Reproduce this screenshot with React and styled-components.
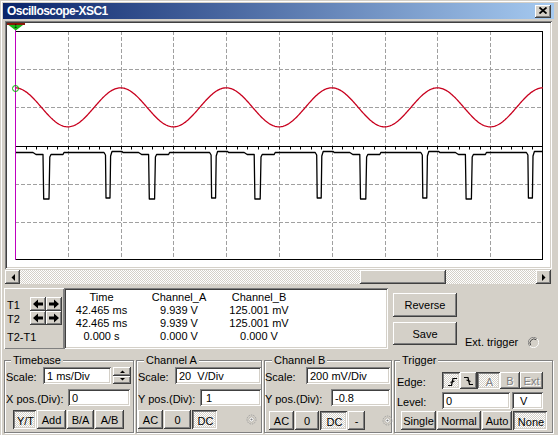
import React from "react";
import styled, { createGlobalStyle, css } from "styled-components";

const GlobalStyle = createGlobalStyle`
  html, body {
    margin: 0;
    padding: 0;
    background: #d4d0c8;
  }
  body {
    font-family: "Liberation Sans", Arial, sans-serif;
    font-size: 11px;
    color: #000;
  }
  * {
    box-sizing: border-box;
  }
`;

const raised = css`
  background-color: #d4d0c8;
  box-shadow: inset -1px -1px 0 #404040, inset 1px 1px 0 #fff,
    inset -2px -2px 0 #808080, inset 2px 2px 0 #d4d0c8;
`;

const sunken = css`
  box-shadow: inset 1px 1px 0 #808080, inset -1px -1px 0 #fff,
    inset 2px 2px 0 #404040, inset -2px -2px 0 #d4d0c8;
`;

const dither = css`
  background-color: #fff;
  background-image: repeating-conic-gradient(#d4d0c8 0 25%, #fff 0 50%);
  background-size: 2px 2px;
`;

const pressed = css`
  ${dither};
  box-shadow: inset 1px 1px 0 #404040, inset -1px -1px 0 #fff,
    inset 2px 2px 0 #808080, inset -2px -2px 0 #d4d0c8;
  padding: 2px 0 0 2px;
`;

const Window = styled.div`
  width: 558px;
  height: 435px;
  padding: 3px 4px 0 3px;
  background: #d4d0c8;
  display: flex;
  flex-direction: column;
  overflow: hidden;
  box-shadow: inset 1px 1px 0 #d4d0c8, inset 2px 2px 0 #fff;
`;

const TitleBar = styled.div`
  height: 16px;
  flex: none;
  display: flex;
  align-items: center;
  justify-content: space-between;
  padding: 0 3px 0 4px;
  background: linear-gradient(to right, #0a246a, #a6caf0);
  color: #fff;
  font-weight: bold;
  font-size: 12px;
  letter-spacing: -0.55px;
`;

const CloseBtn = styled.div`
  width: 16px;
  height: 13px;
  ${raised};
  display: flex;
  align-items: center;
  justify-content: center;
  padding-bottom: 1px;
`;

const Screen = styled.div`
  margin: 2px 2px 0 2px;
  height: 248px;
  flex: none;
  padding: 2px;
  background: #fff;
  ${sunken};

  svg {
    display: block;
  }
`;

const ScrollBar = styled.div`
  margin: 1px 3px 0 2px;
  height: 14px;
  flex: none;
  display: flex;
  ${dither};
`;

const ScrollBtn = styled.div`
  width: 15px;
  height: 14px;
  flex: none;
  ${raised};
  display: flex;
  align-items: center;
  justify-content: center;
`;

const Thumb = styled.div`
  width: 86px;
  height: 14px;
  flex: none;
  ${raised};
`;

const Track = styled.div`
  flex: 1;
`;

const CursorRow = styled.div`
  display: flex;
  margin: 4px 0 0 1px;
  height: 61px;
  flex: none;
`;

const TBox = styled.div`
  width: 60px;
  flex: none;
  padding: 9px 0 0 3px;
  box-shadow: inset 1px 1px 0 #fff, inset -1px -1px 0 #808080;
`;

const TRow = styled.div`
  display: flex;
  align-items: center;
  height: 14px;
`;

const TLabel = styled.span`
  width: 23px;
  flex: none;
  padding-top: 1px;
`;

const TDiff = styled.div`
  margin-top: 6px;
  line-height: 13px;
`;

const ArrowBtn = styled.div`
  width: 16px;
  height: 14px;
  flex: none;
  ${raised};
  display: flex;
  align-items: center;
  justify-content: center;
`;

const DataBox = styled.div`
  width: 324px;
  flex: none;
  background: #fff;
  ${sunken};
  padding-top: 3px;
  display: grid;
  grid-template-columns: 75px 80px 80px;
  grid-auto-rows: 13px;
  align-content: start;
  text-align: center;
  line-height: 13px;
  white-space: nowrap;
`;

const SideButtons = styled.div`
  margin-left: 5px;
  padding-top: 5px;
  display: flex;
  flex-direction: column;
  gap: 5px;
`;

const Btn = styled.div`
  width: ${(p) => p.$w}px;
  height: ${(p) => p.$h || 19}px;
  flex: none;
  display: flex;
  align-items: center;
  justify-content: center;
  white-space: nowrap;
  color: ${(p) => (p.$off ? "#808080" : "#000")};
  text-shadow: ${(p) => (p.$off ? "1px 1px 0 #fff" : "none")};
  ${(p) => (p.$on ? pressed : raised)};
`;

const ExtTrigger = styled.div`
  align-self: flex-end;
  margin-left: 8px;
  height: 13px;
  display: flex;
  align-items: center;
  gap: 10px;
  line-height: 13px;
`;

const Groups = styled.div`
  display: flex;
  gap: 2px;
  margin: 11px 0 0 1px;
  flex: none;
`;

const Group = styled.div`
  width: ${(p) => p.$w}px;
  height: 73px;
  flex: none;
  border: 1px solid #808080;
  box-shadow: inset 1px 1px 0 #fff, 1px 1px 0 #fff;
  padding-left: ${(p) => p.$pl}px;
`;

const Legend = styled.div`
  width: fit-content;
  margin: -7px 0 0 ${(p) => p.$ml}px;
  padding: 0 2px;
  background: #d4d0c8;
  line-height: 13px;
`;

const Row = styled.div`
  display: flex;
  align-items: center;
  height: ${(p) => p.$h || 17}px;
  margin-top: ${(p) => p.$mt || 0}px;
  margin-left: ${(p) => p.$ml || 0}px;
  gap: ${(p) => p.$gap || 0}px;
`;

const Label = styled.span`
  width: ${(p) => p.$w}px;
  flex: none;
  white-space: nowrap;
  padding-top: 2px;
`;

const Field = styled.div`
  width: ${(p) => p.$w}px;
  height: 17px;
  flex: none;
  background: #fff;
  ${sunken};
  padding: 2px 0 0 ${(p) => p.$pl || 4}px;
  line-height: 14px;
  white-space: pre;
  margin-left: ${(p) => p.$ml || 0}px;
`;

const Spin = styled.div`
  width: 18px;
  height: 17px;
  margin-left: 2px;
  flex: none;
  display: flex;
  flex-direction: column;
`;

const SpinBtn = styled.div`
  flex: 1;
  ${raised};
  display: flex;
  align-items: center;
  justify-content: center;
`;

const Knob = styled.div`
  margin-left: ${(p) => p.$ml}px;
  width: 11px;
  height: 11px;
  flex: none;
  display: flex;
`;

/* ---------- drawings ---------- */

const Tri = ({ dir }) => {
  const pts = {
    left: "4,0 4,7 0.5,3.5",
    right: "0,0 0,7 3.5,3.5",
    up: "0,3 5,3 2.5,0.5",
    down: "0,0 5,0 2.5,2.5",
  }[dir];
  const w = dir === "up" || dir === "down" ? 5 : 4;
  const h = dir === "up" || dir === "down" ? 3 : 7;
  return (
    <svg width={w} height={h} viewBox={`0 0 ${w} ${h}`}>
      <polygon points={pts} fill="#000" />
    </svg>
  );
};

const Arrow = ({ right }) => (
  <svg width="10" height="10" viewBox="0 0 10 10">
    <polygon
      points="0,5 5,0.5 5,3.5 10,3.5 10,6.5 5,6.5 5,9.5"
      fill="#000"
      transform={right ? "translate(10,0) scale(-1,1)" : undefined}
    />
  </svg>
);

const EdgeIcon = ({ falling }) => (
  <svg width="11" height="10" viewBox="0 0 11 10">
    <g
      fill="none"
      stroke="#000"
      strokeWidth="1.2"
      transform={falling ? "translate(11,0) scale(-1,1)" : undefined}
    >
      <path d="M1 8.5 H4.5 L6 1.5 H10" />
      <path d="M3.5 5.5 L7.5 4" />
    </g>
  </svg>
);

const Radio = () => (
  <svg width="11" height="11" viewBox="0 0 12 12">
    <path d="M10 2 A5.5 5.5 0 0 0 2 10" fill="none" stroke="#808080" />
    <path d="M9 3 A4.3 4.3 0 0 0 3 9" fill="none" stroke="#404040" />
    <path d="M2 10 A5.5 5.5 0 0 0 10 2" fill="none" stroke="#fff" />
  </svg>
);

const Dial = () => (
  <svg width="11" height="11" viewBox="0 0 11 11">
    <circle cx="5.5" cy="5.5" r="4.5" fill="none" stroke="#a0a0a0" strokeDasharray="1.5 1" />
    <circle cx="5.5" cy="5.5" r="2.6" fill="#fff" stroke="#b8b4ac" />
    <circle cx="5.5" cy="5.5" r="1.1" fill="#808080" />
  </svg>
);

/* ---------- scope plot ---------- */

const X0 = 15;
const Y0 = 31;
const PW = 528;
const PH = 229;
const DX = PW / 10;
const DY = PH / 6;
const PERIOD = 2 * DX;

const sinePath = (() => {
  const cy = Y0 + 2 * DY;
  let d = "";
  for (let x = 0; x <= PW; x += 1) {
    const y = cy - 19.5 * Math.cos((2 * Math.PI * x) / PERIOD);
    d += `${x === 0 ? "M" : "L"}${(X0 + x).toFixed(1)} ${y.toFixed(2)} `;
  }
  return d;
})();

const pulsePath = (() => {
  const b = 152.5;
  const pts = [[X0, b]];
  for (let k = 0; k < 5; k++) {
    const w = 43 + k * PERIOD;
    pts.push(
      [w - 10, b], [w - 7, 154.5], [w, 154.5], [w + 0.7, 199], [w + 6, 199],
      [w + 6.8, 157], [w + 8, 154.5], [w + 20, 154.5], [w + 21, b]
    );
    const n = 106 + k * PERIOD;
    pts.push(
      [n - 2, b], [n - 0.5, 155], [n, 198], [n + 4, 198], [n + 4.6, 156],
      [n + 6, 151.5], [n + 16, 151.5], [n + 17, b]
    );
  }
  pts.push([X0 + PW + 5, b]);
  return pts.map(([x, y], i) => `${i ? "L" : "M"}${x.toFixed(1)} ${y}`).join(" ");
})();

const Scope = () => {
  const vx = Array.from({ length: 9 }, (_, i) => Math.round(X0 + (i + 1) * DX) + 0.5);
  const hy = [1, 2, 4, 5].map((i) => Math.round(Y0 + i * DY) + 0.5);
  const axisY = Math.round(Y0 + 3 * DY) + 0.5;
  const ticks = Array.from({ length: 49 }, (_, i) => Math.round(X0 + (i + 1) * (DX / 5)) + 0.5);
  return (
    <svg width="543" height="244" viewBox="7 23 543 244">
      <defs>
        <clipPath id="plot">
          <rect x={X0} y={Y0} width={PW} height={PH} />
        </clipPath>
      </defs>
      <g stroke="#a0a0a0" strokeDasharray="4 2">
        {vx.map((x) => (
          <line key={x} x1={x} y1={Y0} x2={x} y2={Y0 + PH} />
        ))}
        {hy.map((y) => (
          <line key={y} x1={X0} y1={y} x2={X0 + PW} y2={y} />
        ))}
      </g>
      <line x1={X0} y1={axisY} x2={X0 + PW} y2={axisY} stroke="#000" />
      {ticks.map((x) => (
        <line key={x} x1={x} y1={axisY} x2={x} y2={axisY + 3} stroke="#000" />
      ))}
      <rect x={X0 + 0.5} y={Y0 + 0.5} width={PW - 1} height={PH - 1} fill="none" stroke="#000" />
      <g clipPath="url(#plot)" fill="none" strokeWidth="1.3" strokeLinejoin="round">
        <path d={sinePath} stroke="#c8001e" />
        <path d={pulsePath} stroke="#000" />
      </g>
      <line x1="15.5" y1="29" x2="15.5" y2={Y0 + PH} stroke="#c000c0" />
      <circle cx="15.5" cy="88.5" r="3" fill="none" stroke="#00b000" />
      <rect x="7" y="22" width="18" height="3" fill="#8b1a0a" />
      <polygon points="8.5,25 23,25 15.75,30.5" fill="#18b818" />
      <text x="15.75" y="28.3" fontSize="5" fill="#000" textAnchor="middle" fontFamily="Liberation Sans, sans-serif">
        1
      </text>
    </svg>
  );
};

/* ---------- page ---------- */

export default function App() {
  return (
    <>
      <GlobalStyle />
      <Window>
        <TitleBar>
          <span>Oscilloscope-XSC1</span>
          <CloseBtn>
            <svg width="8" height="7" viewBox="0 0 8 7">
              <path d="M0.5 0.5 L7.5 6.5 M7.5 0.5 L0.5 6.5" stroke="#000" strokeWidth="1.8" />
            </svg>
          </CloseBtn>
        </TitleBar>

        <Screen>
          <Scope />
        </Screen>

        <ScrollBar>
          <ScrollBtn>
            <Tri dir="left" />
          </ScrollBtn>
          <Track style={{ flex: "none", width: 340 }} />
          <Thumb />
          <Track />
          <ScrollBtn>
            <Tri dir="right" />
          </ScrollBtn>
        </ScrollBar>

        <CursorRow>
          <TBox>
            <TRow>
              <TLabel>T1</TLabel>
              <ArrowBtn>
                <Arrow />
              </ArrowBtn>
              <ArrowBtn>
                <Arrow right />
              </ArrowBtn>
            </TRow>
            <TRow>
              <TLabel>T2</TLabel>
              <ArrowBtn>
                <Arrow />
              </ArrowBtn>
              <ArrowBtn>
                <Arrow right />
              </ArrowBtn>
            </TRow>
            <TDiff>T2-T1</TDiff>
          </TBox>

          <DataBox>
            <span>Time</span>
            <span>Channel_A</span>
            <span>Channel_B</span>
            <span>42.465 ms</span>
            <span>9.939 V</span>
            <span>125.001 mV</span>
            <span>42.465 ms</span>
            <span>9.939 V</span>
            <span>125.001 mV</span>
            <span>0.000 s</span>
            <span>0.000 V</span>
            <span>0.000 V</span>
          </DataBox>

          <SideButtons>
            <Btn $w={64} $h={24}>Reverse</Btn>
            <Btn $w={64} $h={23}>Save</Btn>
          </SideButtons>

          <ExtTrigger>
            <span>Ext. trigger</span>
            <Radio />
          </ExtTrigger>
        </CursorRow>

        <Groups>
          <Group $w={130} $pl={1}>
            <Legend $ml={5}>Timebase</Legend>
            <Row>
              <Label $w={37}>Scale:</Label>
              <Field $w={68}>1 ms/Div</Field>
              <Spin>
                <SpinBtn>
                  <Tri dir="up" />
                </SpinBtn>
                <SpinBtn>
                  <Tri dir="down" />
                </SpinBtn>
              </Spin>
            </Row>
            <Row $mt={5}>
              <Label $w={62}>X pos.(Div):</Label>
              <Field $w={62}>0</Field>
            </Row>
            <Row $mt={4} $h={19} $ml={7} $gap={1}>
              <Btn $w={23} $on>Y/T</Btn>
              <Btn $w={29}>Add</Btn>
              <Btn $w={27}>B/A</Btn>
              <Btn $w={29}>A/B</Btn>
            </Row>
          </Group>

          <Group $w={126} $pl={1}>
            <Legend $ml={6}>Channel A</Legend>
            <Row>
              <Label $w={37}>Scale:</Label>
              <Field $w={86}>{"20  V/Div"}</Field>
            </Row>
            <Row $mt={5}>
              <Label $w={62}>Y pos.(Div):</Label>
              <Field $w={61} $pl={6}>1</Field>
            </Row>
            <Row $mt={4} $h={19} $gap={1}>
              <Btn $w={25}>AC</Btn>
              <Btn $w={27}>0</Btn>
              <Btn $w={25} $on>DC</Btn>
              <Knob $ml={28}>
                <Dial />
              </Knob>
            </Row>
          </Group>

          <Group $w={128} $pl={0}>
            <Legend $ml={7}>Channel B</Legend>
            <Row>
              <Label $w={41}>Scale:</Label>
              <Field $w={84}>200 mV/Div</Field>
            </Row>
            <Row $mt={5}>
              <Label $w={66}>Y pos.(Div):</Label>
              <Field $w={59}>-0.8</Field>
            </Row>
            <Row $mt={5} $h={19} $ml={4} $gap={1}>
              <Btn $w={25}>AC</Btn>
              <Btn $w={24}>0</Btn>
              <Btn $w={27} $on>DC</Btn>
              <Btn $w={17}>-</Btn>
              <Knob $ml={16}>
                <Dial />
              </Knob>
            </Row>
          </Group>

          <Group $w={159} $pl={2}>
            <Legend $ml={3}>Trigger</Legend>
            <Row $mt={5}>
              <Label $w={45}>Edge:</Label>
              <Btn $w={18} $h={17} $on>
                <EdgeIcon />
              </Btn>
              <Btn $w={17} $h={17}>
                <EdgeIcon falling />
              </Btn>
              <Btn $w={23} $h={17} $on $off>A</Btn>
              <Btn $w={20} $h={17} $off>B</Btn>
              <Btn $w={23} $h={17} $off>Ext</Btn>
            </Row>
            <Row $mt={3}>
              <Label $w={45}>Level:</Label>
              <Field $w={68}>0</Field>
              <Field $w={31} $ml={2} $pl={8}>V</Field>
            </Row>
            <Row $mt={2} $h={19} $ml={4} $gap={1}>
              <Btn $w={35}>Single</Btn>
              <Btn $w={44}>Normal</Btn>
              <Btn $w={30}>Auto</Btn>
              <Btn $w={34} $on>None</Btn>
            </Row>
          </Group>
        </Groups>
      </Window>
    </>
  );
}
